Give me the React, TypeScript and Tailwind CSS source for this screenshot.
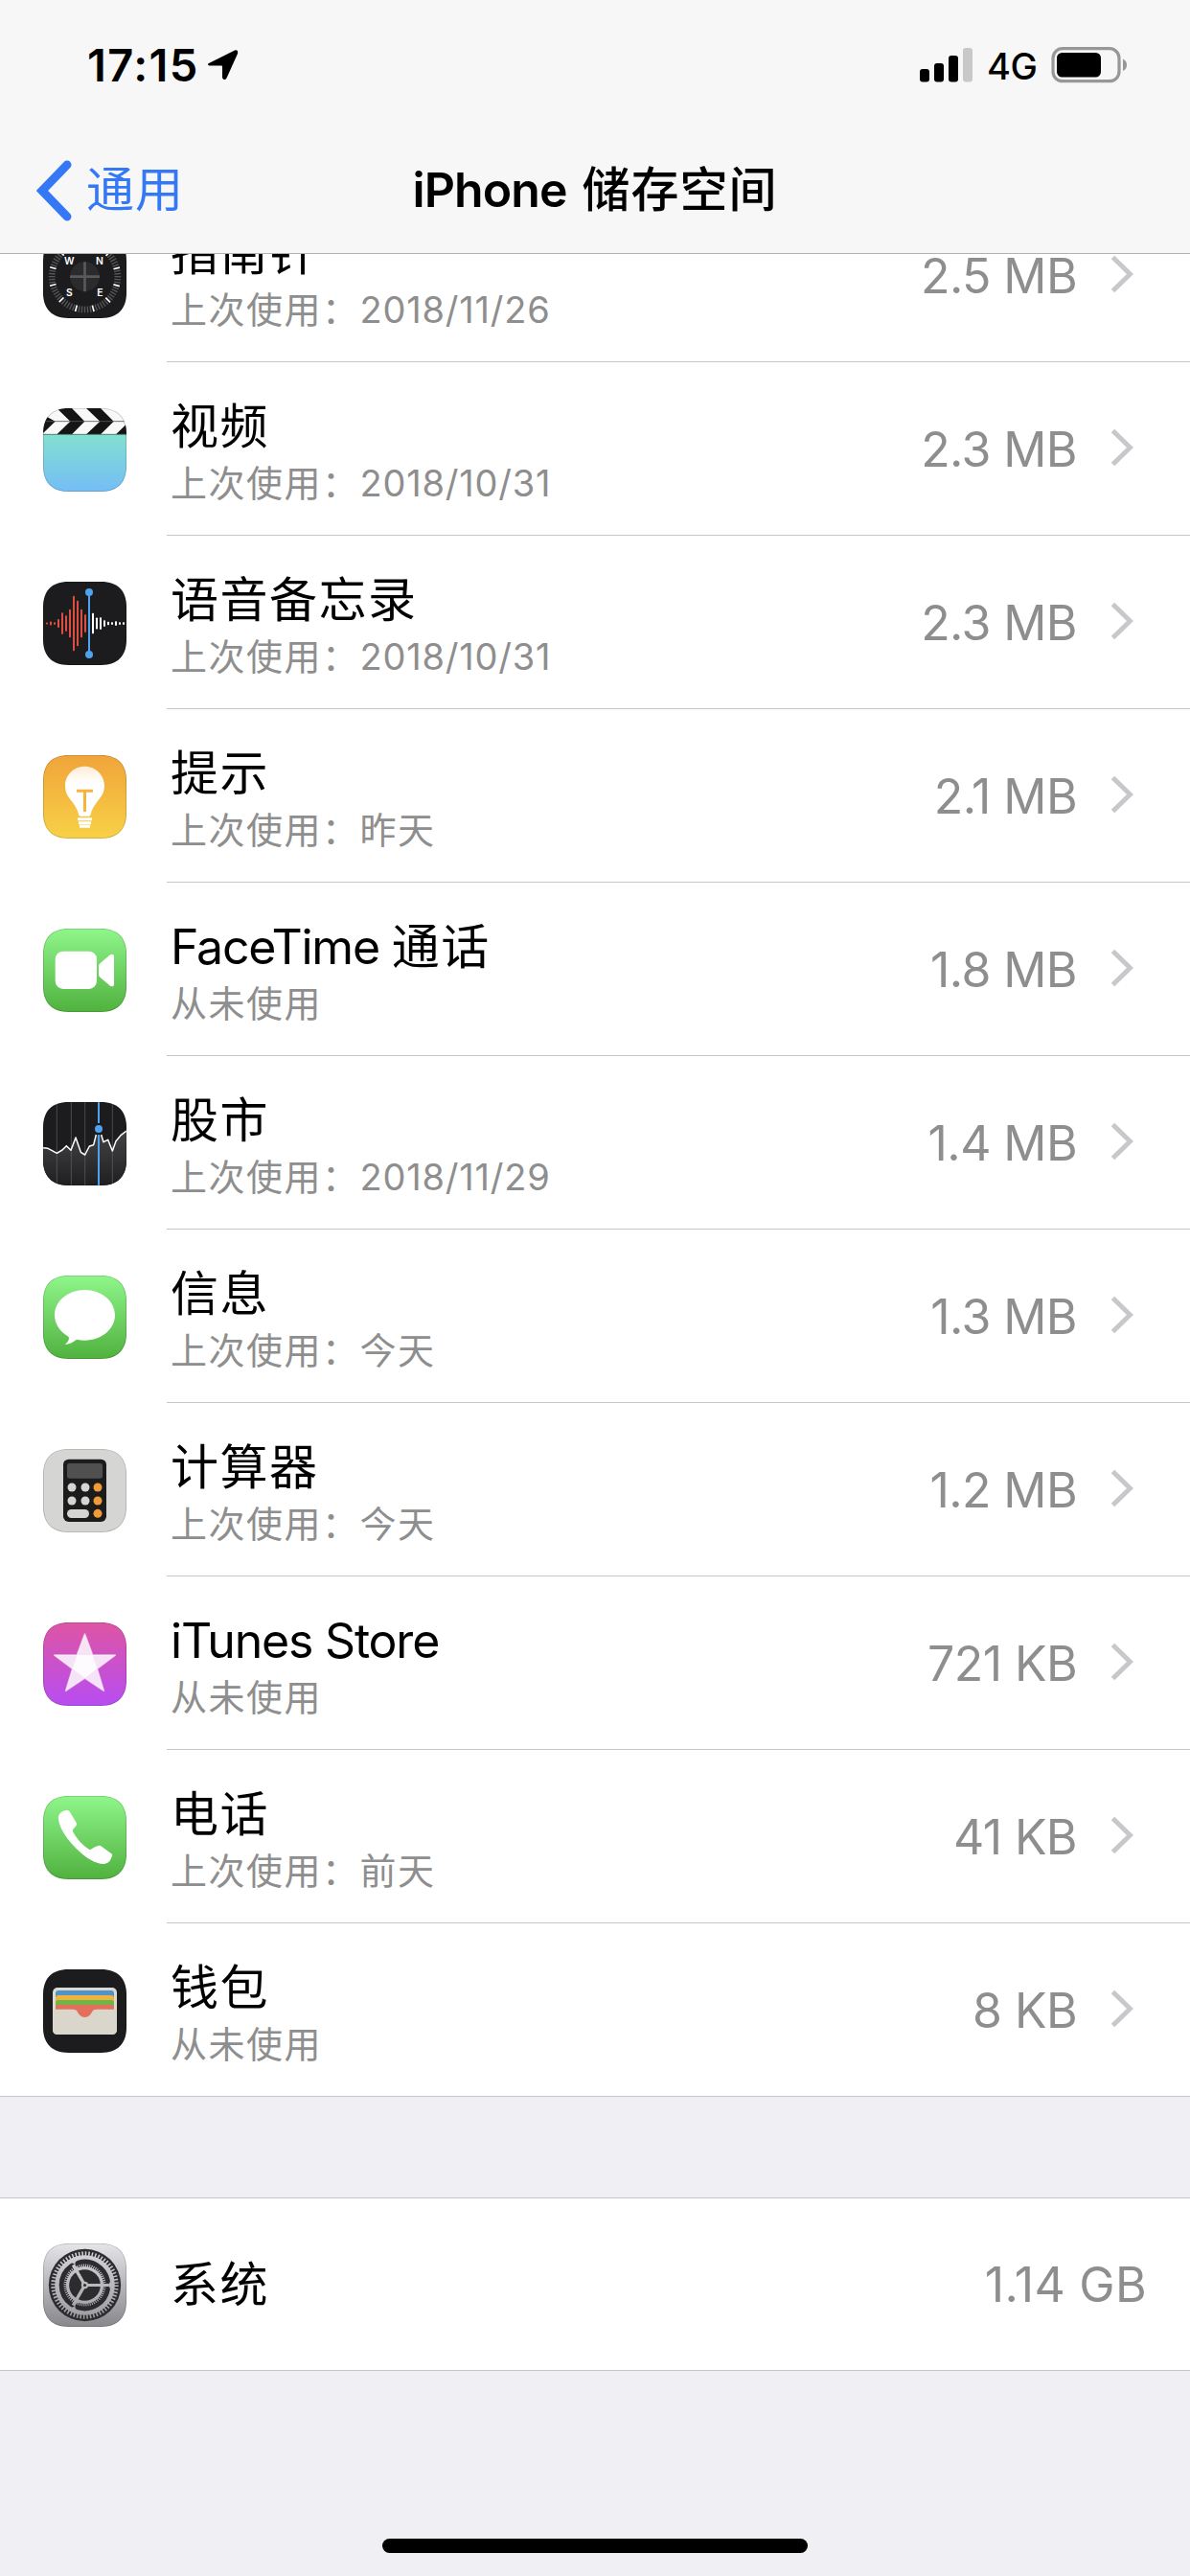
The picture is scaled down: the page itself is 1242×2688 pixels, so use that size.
import * as React from 'react';

interface AppItem {
  name: string;
  detail: string;
  size: string;
  icon: React.ReactNode;
}

// Every icon is drawn on a 261 x 261 grid (87pt at 3x)
const Tile: React.FC<{ id: string; from: string; to: string; children?: React.ReactNode }> = ({ id, from, to, children }) => (
  <svg viewBox="0 0 261 261" className="block h-[87px] w-[87px]">
    <defs>
      <linearGradient id={`${id}-bg`} x1="0" y1="0" x2="0" y2="1">
        <stop offset="0" stopColor={from} />
        <stop offset="1" stopColor={to} />
      </linearGradient>
      <clipPath id={`${id}-clip`}>
        <path d="M80 0H181C233 0 261 28 261 80V181C261 233 233 261 181 261H80C28 261 0 233 0 181V80C0 28 28 0 80 0Z" />
      </clipPath>
    </defs>
    <g clipPath={`url(#${id}-clip)`}>
      <rect width="261" height="261" fill={`url(#${id}-bg)`} />
      {children}
      <path
        d="M80 0H181C233 0 261 28 261 80V181C261 233 233 261 181 261H80C28 261 0 233 0 181V80C0 28 28 0 80 0Z"
        fill="none"
        stroke="#000"
        strokeOpacity="0.18"
        strokeWidth="5"
      />
    </g>
  </svg>
);

const ticks = Array.from({ length: 72 }, (_, i) => i * 5);

const CompassIcon = () => (
  <Tile id="compass" from="#1c1c1e" to="#1c1c1e">
    {ticks.map((deg) => (
      <rect
        key={deg}
        x="128.5"
        y="18"
        width={deg % 30 === 15 ? 5 : 4}
        height="20"
        fill={deg % 30 === 15 ? '#fff' : '#58585a'}
        transform={`rotate(${deg} 130.5 131)`}
      />
    ))}
    <circle cx="130.5" cy="131" r="46" fill="#2b2b2d" />
    <path d="M84 131H177M130.5 85V178" stroke="#59595b" strokeWidth="8" />
    <g fill="#fff" fontSize="31" fontWeight="600" textAnchor="middle" fontFamily="Inter, sans-serif">
      <text x="82" y="94">W</text>
      <text x="177" y="94">N</text>
      <text x="82" y="192">S</text>
      <text x="178" y="192">E</text>
    </g>
  </Tile>
);

const VideosIcon = () => (
  <Tile id="videos" from="#8aefc0" to="#74bdf6">
    <rect width="261" height="82" fill="#f8f8f8" />
    <g fill="#151515">
      <path d="M0 20L38 41L0 78Z" />
      <path d="M43 0H90L130 41L90 82H43L85 41Z" />
      <path d="M135 0H180L221 41L180 82H135L178 41Z" />
      <path d="M228 82L270 41V82Z" />
    </g>
    <path d="M0 41H261" stroke="#555" strokeWidth="2.5" />
    <path d="M0 82H261" stroke="#4c7f72" strokeWidth="3" />
  </Tile>
);

const redBars = [6, 12, 8, 27, 68, 50, 88, 172, 142, 88, 56];
const whiteBars = [64, 36, 38, 20, 10, 8, 14, 8, 8];

const VoiceMemosIcon = () => (
  <Tile id="voice" from="#1c1c1e" to="#1c1c1e">
    {redBars.map((h, i) => (
      <rect key={i} x={9 + i * 12} y={130.5 - h / 2} width="6" height={h} rx="2" fill="#dc4f40" />
    ))}
    {whiteBars.map((h, i) => (
      <rect key={i} x={153 + i * 12} y={130.5 - h / 2} width="6" height={h} rx="2" fill="#fff" />
    ))}
    <path d="M144 33V228" stroke="#4da3ee" strokeWidth="6" />
    <circle cx="144" cy="33" r="12" fill="#4da3ee" />
    <circle cx="144" cy="228" r="12" fill="#4da3ee" />
  </Tile>
);

const TipsIcon = () => (
  <Tile id="tips" from="#f0a43a" to="#f8d146">
    <defs>
      <linearGradient id="bulb" x1="0" y1="0" x2="0" y2="1">
        <stop offset="0" stopColor="#fdeed6" />
        <stop offset="0.35" stopColor="#fff" />
      </linearGradient>
    </defs>
    <path
      d="M130 35C96 35 69 62 69 96C69 118 79 131 90 145C101 159 108 172 111 185Q112 191 118 191H142Q148 191 149 185C152 172 159 159 170 145C181 131 192 118 192 96C192 62 164 35 130 35Z"
      fill="url(#bulb)"
    />
    <path d="M105 112H156M130.5 112V177" stroke="#f3b53e" strokeWidth="9" />
    <path d="M108 200H153M111 212H150M114 223H147" stroke="#fff" strokeWidth="9" />
  </Tile>
);

const FaceTimeIcon = () => (
  <Tile id="facetime" from="#8ff68b" to="#50b13e">
    <rect x="38" y="71" width="130" height="118" rx="25" fill="#fff" />
    <path d="M174 120C174 115 175 112 178 109L210 82C216 78 222 80 222 87V174C222 181 216 183 210 179L178 152C175 149 174 146 174 141Z" fill="#fff" />
  </Tile>
);

const StocksIcon = () => (
  <Tile id="stocks" from="#1c1c1e" to="#1c1c1e">
    <defs>
      <linearGradient id="area" x1="0" y1="0" x2="0" y2="1">
        <stop offset="0" stopColor="#444446" />
        <stop offset="1" stopColor="#1f1f21" />
      </linearGradient>
    </defs>
    <path
      d="M0 143L15 145L28 152L43 160L60 150L73 137L87 151L102 111L118 157L131 165L145 138L158 134L168 105H181L189 125L203 118L217 153L228 122L243 104L261 90V261H0Z"
      fill="url(#area)"
    />
    <path d="M43 0V261M88 0V261M131 0V261M217 0V261" stroke="#626264" strokeWidth="2" />
    <path
      d="M0 143L15 145L28 152L43 160L60 150L73 137L87 151L102 111L118 157L131 165L145 138L158 134L166 102M182 102L189 125L203 118L217 153L228 122L243 104L261 90"
      fill="none"
      stroke="#fff"
      strokeWidth="4.5"
      strokeLinejoin="round"
    />
    <path d="M174 0V66M174 102V261" stroke="#4da3ee" strokeWidth="6" />
    <circle cx="174" cy="84" r="12" fill="#4da3ee" />
  </Tile>
);

const MessagesIcon = () => (
  <Tile id="messages" from="#8ff68b" to="#50b13e">
    <path
      d="M130.5 45C78 45 36 80 36 124C36 151 52 175 77 190C81 193 82 196 80 201C78 207 73 212 68 216C81 215 94 209 105 200C113 202 122 203 130.5 203C183 203 225 168 225 124C225 80 183 45 130.5 45Z"
      fill="#fff"
    />
  </Tile>
);

const CalculatorIcon = () => (
  <Tile id="calc" from="#d5d5d3" to="#d5d5d3">
    <rect x="63" y="32" width="135" height="196" rx="17" fill="#1c1c1c" />
    <rect x="75" y="45" width="111" height="47" rx="7" fill="#505050" />
    {[120, 162].map((y) => (
      <React.Fragment key={y}>
        <circle cx="90" cy={y} r="13.5" fill="#d5d5d3" />
        <circle cx="132" cy={y} r="13.5" fill="#d5d5d3" />
        <circle cx="171" cy={y} r="13.5" fill="#f09a38" />
      </React.Fragment>
    ))}
    <rect x="75" y="189" width="69" height="27" rx="13.5" fill="#d5d5d3" />
    <circle cx="171" cy="202" r="13.5" fill="#f09a38" />
  </Tile>
);

const ITunesIcon = () => (
  <Tile id="itunes" from="#de55a4" to="#b74df2">
    <path
      d="M130.5 36L155 102H226L169 145L190 214L130.5 174L71 214L92 145L35 102H106Z"
      fill="#fff"
      fillOpacity="0.84"
      stroke="#fff"
      strokeOpacity="0.6"
      strokeWidth="5"
      strokeLinejoin="round"
    />
    <path d="M106 102H155L169 145L130.5 174L92 145Z" fill="#fff" fillOpacity="0.85" />
  </Tile>
);

const PhoneIcon = () => (
  <Tile id="phone" from="#8ff68b" to="#50b13e">
    <path
      d="M48 66C50 53 62 46 73 45C78 44 81 46 84 50L104 84C106 88 105 92 102 95L94 104C92 107 92 109 94 113C106 135 124 154 144 167C147 168 149 168 152 166C158 162 166 157 173 156C177 155 180 156 183 158L212 179C217 182 218 186 215 190C212 202 205 211 192 213C168 215 133 194 104 165C74 135 46 95 48 66Z"
      fill="#fff"
    />
  </Tile>
);

const WalletIcon = () => (
  <Tile id="wallet" from="#1c1c1e" to="#1c1c1e">
    <rect x="30" y="57" width="201" height="147" rx="15" fill="#dcdad2" />
    <rect x="39" y="66" width="183" height="40" rx="9" fill="#4f94c8" />
    <rect x="39" y="81" width="183" height="40" rx="9" fill="#efb13f" />
    <rect x="39" y="96" width="183" height="40" rx="9" fill="#6bb944" />
    <rect x="39" y="110" width="183" height="46" rx="9" fill="#e3705c" />
    <path
      d="M30 125H93C107 125 107 134 113 141C121 153 140 153 148 141C154 134 154 125 168 125H231V189Q231 204 216 204H45Q30 204 30 189Z"
      fill="#dad6cb"
    />
  </Tile>
);

const SettingsIcon = () => (
  <Tile id="settings" from="#e4e4e9" to="#88888c">
    <defs>
      <linearGradient id="gear" gradientUnits="userSpaceOnUse" x1="0" y1="20" x2="0" y2="240">
        <stop offset="0" stopColor="#d6d6da" />
        <stop offset="1" stopColor="#9c9ca0" />
      </linearGradient>
    </defs>
    <circle cx="130.5" cy="130.5" r="113" fill="#2c2c2f" />
    <circle cx="130.5" cy="130.5" r="98" fill="none" stroke="url(#gear)" strokeWidth="15" strokeDasharray="4.6 5.663" />
    <circle cx="130.5" cy="130.5" r="94" fill="url(#gear)" />
    {/* slots between the two toothed rings */}
    <g fill="none" stroke="#2c2c2f" strokeWidth="23" strokeLinecap="round">
      <path d="M112 64A69 69 0 0 1 198 117" />
      <path d="M198 144A69 69 0 0 1 112 197" />
      <path d="M91 74A69 69 0 0 0 91 187" />
    </g>
    <circle cx="130.5" cy="130.5" r="61" fill="none" stroke="url(#gear)" strokeWidth="10" strokeDasharray="3 3.388" />
    <circle cx="130.5" cy="130.5" r="58" fill="url(#gear)" />
    <circle cx="130.5" cy="130.5" r="49" fill="#2c2c2f" />
    <path d="M130.5 130.5L94 67M130.5 130.5L94 194" stroke="url(#gear)" strokeWidth="10" />
    <path d="M124 126H204V135H124Z" fill="#b9b9bd" />
    <circle cx="130.5" cy="130.5" r="11" fill="#b9b9bd" />
    <circle cx="130.5" cy="130.5" r="4.5" fill="#2c2c2f" />
  </Tile>
);

const apps: AppItem[] = [
  { name: '指南针', detail: '上次使用：2018/11/26', size: '2.5 MB', icon: <CompassIcon /> },
  { name: '视频', detail: '上次使用：2018/10/31', size: '2.3 MB', icon: <VideosIcon /> },
  { name: '语音备忘录', detail: '上次使用：2018/10/31', size: '2.3 MB', icon: <VoiceMemosIcon /> },
  { name: '提示', detail: '上次使用：昨天', size: '2.1 MB', icon: <TipsIcon /> },
  { name: 'FaceTime 通话', detail: '从未使用', size: '1.8 MB', icon: <FaceTimeIcon /> },
  { name: '股市', detail: '上次使用：2018/11/29', size: '1.4 MB', icon: <StocksIcon /> },
  { name: '信息', detail: '上次使用：今天', size: '1.3 MB', icon: <MessagesIcon /> },
  { name: '计算器', detail: '上次使用：今天', size: '1.2 MB', icon: <CalculatorIcon /> },
  { name: 'iTunes Store', detail: '从未使用', size: '721 KB', icon: <ITunesIcon /> },
  { name: '电话', detail: '上次使用：前天', size: '41 KB', icon: <PhoneIcon /> },
  { name: '钱包', detail: '从未使用', size: '8 KB', icon: <WalletIcon /> },
];

// Latin runs sit tighter than the Chinese ones, so they get their own tracking
const Mixed: React.FC<{ text: string; latin: string; han: string }> = ({ text, latin, han }) => (
  <>
    {text.split(/([\x20-\x7e]+)/).filter(Boolean).map((part, i) => (
      <span key={i} className={/^[\x20-\x7e]/.test(part) ? latin : han}>
        {part}
      </span>
    ))}
  </>
);

const StatusBar = () => (
  <div className="flex h-[132px] items-start justify-between pl-[91px] pr-[65px]">
    <div className="flex items-start">
      <span className="mt-[40px] text-[47px] font-semibold leading-[56px] tracking-[1.4px]">17:15</span>
      <svg viewBox="0 0 32 32" className="ml-[9px] mt-[52px] h-[32px] w-[32px]">
        <path d="M2 13.5L28 0.5Q32 -0.5 31 4L19.5 29.5Q18 32 16 30.5Q15 30 15 28V17.5Q15 16.5 14 16.5H3Q0 16.5 0 15Q0 14.3 2 13.5Z" />
      </svg>
    </div>
    <div className="flex items-start">
      <svg viewBox="0 0 55 36" className="mt-[50px] h-[36px] w-[55px]">
        <rect x="0" y="22" width="10" height="13.5" rx="3" />
        <rect x="15" y="16" width="10" height="19.5" rx="3" />
        <rect x="30" y="8" width="10" height="27.5" rx="3" />
        <rect x="45" y="0" width="10" height="35.5" rx="3" fill="#c8c8c8" />
      </svg>
      <span className="ml-[15px] mt-[46px] w-[53px] text-[38px] font-medium leading-[46px] tracking-[-0.5px]">4G</span>
      <svg viewBox="0 0 80 38" className="ml-[14px] mt-[49px] h-[38px] w-[80px]">
        <rect x="2" y="1.7" width="69" height="34" rx="10" fill="none" stroke="#979797" strokeWidth="3.2" />
        <rect x="6" y="6" width="46" height="25.5" rx="5.5" />
        <path d="M75 12.5Q79 14.5 79 18.7Q79 23 75 25Z" fill="#979797" />
      </svg>
    </div>
  </div>
);

const NavBar = () => (
  <div className="grid h-[132px] grid-cols-[1fr_auto_1fr] items-start">
    <div className="flex items-start pl-[38px] text-[#3478f6]">
      <svg viewBox="0 0 37 64" className="mt-[35px] h-[64px] w-[37px]">
        <path d="M32 5L6 32L32 59" fill="none" stroke="currentColor" strokeWidth="9" strokeLinecap="round" strokeLinejoin="miter" />
      </svg>
      <span className="ml-[15px] mt-[36px] text-[50px] leading-[60px] tracking-[1px]">通用</span>
    </div>
    <h1 className="mt-[36px] whitespace-nowrap text-[50px] font-semibold leading-[60px]">
      <Mixed text="iPhone 储存空间" latin="tracking-[-0.9px] [word-spacing:4px]" han="font-medium tracking-[1px]" />
    </h1>
    <div />
  </div>
);

const Chevron = () => (
  <svg viewBox="0 0 24 40" className="h-[40px] w-[24px]">
    <path d="M2.5 2.5L20.5 20L2.5 37.5" fill="none" stroke="#c7c7cc" strokeWidth="5" />
  </svg>
);

const Row: React.FC<{ app: AppItem; last: boolean }> = ({ app, last }) => (
  <li className={`flex h-[181px] pl-[45px] ${last ? 'border-b border-[#c6c6ca]' : ''}`}>
    <div className="mt-[48px]">{app.icon}</div>
    <div className={`ml-[42px] flex flex-1 items-start justify-between pl-[4px] ${last ? '' : 'border-b border-[#c6c6ca]'}`}>
      <div className="pt-[37px]">
        <div className="h-[60px] whitespace-nowrap text-[50px] leading-[60px]">
          <Mixed text={app.name} latin="tracking-[-1.2px]" han="tracking-[1.5px]" />
        </div>
        <div className="h-[48px] whitespace-nowrap text-[38px] leading-[58px] text-[#8e8e8e]">
          <Mixed text={app.detail} latin="tracking-[0.8px]" han="tracking-[1.5px]" />
        </div>
      </div>
      <div className="flex items-start pr-[59px]">
        <span className="mt-[61px] text-[50px] leading-[60px] tracking-[-0.6px] text-[#8e8e8e]">{app.size}</span>
        <div className="ml-[35px] mt-[69px]">
          <Chevron />
        </div>
      </div>
    </div>
  </li>
);

const App: React.FC = () => {
  return (
    <div className="flex h-[2688px] w-[1242px] flex-col overflow-hidden bg-[#efeff4] font-['Inter','Noto_Sans_CJK_SC',sans-serif] text-black">
      {/* Header */}
      <header className="relative z-10 h-[265px] shrink-0 border-b border-[#b2b2b2] bg-[#f7f7f7]">
        <StatusBar />
        <NavBar />
      </header>

      {/* App list, scrolled under the header */}
      <ul className="-mt-[68px] bg-white">
        {apps.map((app, index) => (
          <Row key={app.name} app={app} last={index === apps.length - 1} />
        ))}
      </ul>

      {/* System */}
      <div className="mt-[105px] flex h-[181px] shrink-0 items-start border-y border-[#c6c6ca] bg-white pl-[45px] pr-[45px]">
        <div className="mt-[47px]">
          <SettingsIcon />
        </div>
        <span className="ml-[46px] mt-[60px] flex-1 text-[50px] leading-[60px] tracking-[1.5px]">系统</span>
        <span className="mt-[60px] text-[50px] leading-[60px] tracking-[0.3px] text-[#8e8e8e]">1.14 GB</span>
      </div>

      {/* Home indicator */}
      <div className="mb-[24px] mt-auto h-[15px] w-[444px] self-center rounded-full bg-black" />
    </div>
  );
};

export default App;
